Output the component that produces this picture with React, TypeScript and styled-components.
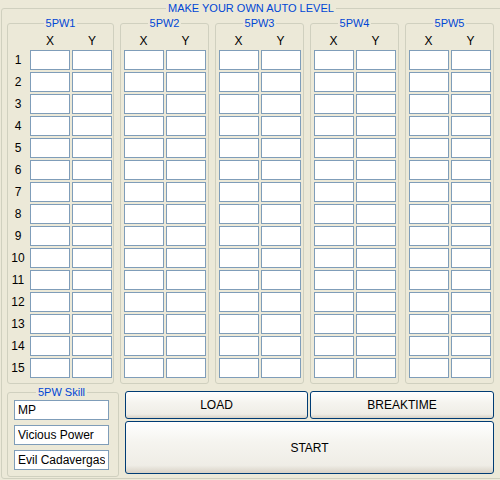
import React from 'react';
import styled, { createGlobalStyle } from 'styled-components';

const GlobalStyle = createGlobalStyle`
  html, body {
    margin: 0;
    padding: 0;
    background: #ece9d8;
    overflow: hidden;
  }
  body {
    font-family: "Liberation Sans", Arial, sans-serif;
    font-size: 11px;
    color: #000;
  }
`;

const rows = Array.from({ length: 15 }, (_, i) => i + 1);
const groups = ['5PW1', '5PW2', '5PW3', '5PW4', '5PW5'];
const skills = ['MP', 'Vicious Power', 'Evil Cadavergas'];

const App: React.FC = () => {
  return (
    <>
      <GlobalStyle />
      <Window>
        <MainBox>
          <Caption>MAKE YOUR OWN AUTO LEVEL</Caption>
          <Groups>
            {groups.map((name, gi) => (
              <GroupBox key={name} first={gi === 0}>
                <Caption>{name}</Caption>
                <CoordGrid numbered={gi === 0}>
                  {gi === 0 && <span />}
                  <ColHead>X</ColHead>
                  <ColHead>Y</ColHead>
                  {rows.map(r => (
                    <React.Fragment key={r}>
                      {gi === 0 && <RowNum>{r}</RowNum>}
                      <TextBox />
                      <TextBox />
                    </React.Fragment>
                  ))}
                </CoordGrid>
              </GroupBox>
            ))}
          </Groups>
          <BottomRow>
            <SkillBox>
              <Caption>5PW Skill</Caption>
              <SkillList>
                {skills.map(s => (
                  <SkillInput key={s} defaultValue={s} />
                ))}
              </SkillList>
            </SkillBox>
            <Buttons>
              <XPButton>LOAD</XPButton>
              <XPButton>BREAKTIME</XPButton>
              <XPButton wide>START</XPButton>
            </Buttons>
          </BottomRow>
        </MainBox>
      </Window>
    </>
  );
};

export default App;

// Styled components

const Window = styled.div`
  width: 500px;
  height: 480px;
  overflow: hidden;
`;

const MainBox = styled.fieldset`
  margin: 2px 0 0 1px;
  width: 510px;
  height: 477px;
  box-sizing: border-box;
  border: 1px solid #d0d0bf;
  border-radius: 3px;
  padding: 2px 0 0 5px;
  display: flex;
  flex-direction: column;

  > legend {
    margin-left: 159px;
  }
`;

const Caption = styled.legend`
  color: #0046d5;
  font-size: 11px;
  line-height: 13px;
  padding: 0 2px;
  margin: 0 auto;
`;

const Groups = styled.div`
  display: flex;
  gap: 6px;
`;

const GroupBox = styled.fieldset<{ first?: boolean }>`
  margin: 0;
  width: ${props => (props.first ? '107px' : '89px')};
  box-sizing: border-box;
  border: 1px solid #d0d0bf;
  border-radius: 3px;
  padding: 4px 0 5px 0;
`;

const CoordGrid = styled.div<{ numbered?: boolean }>`
  display: grid;
  grid-template-columns: ${props => (props.numbered ? '20px 40px 40px' : '40px 40px')};
  grid-template-rows: 14px;
  grid-auto-rows: 20px;
  column-gap: 2px;
  row-gap: 2px;
  justify-content: ${props => (props.numbered ? 'start' : 'center')};
`;

const ColHead = styled.div`
  text-align: center;
  line-height: 14px;
  font-size: 12px;
`;

const RowNum = styled.div`
  display: flex;
  align-items: center;
  justify-content: center;
  font-size: 12px;
`;

const TextBox = styled.input`
  width: 40px;
  height: 20px;
  box-sizing: border-box;
  border: 1px solid #7f9db9;
  background: #fff;
  margin: 0;
  padding: 0 3px;
  font-family: "Liberation Sans", Arial, sans-serif;
  font-size: 12px;
  outline: none;
`;

const BottomRow = styled.div`
  display: flex;
  align-items: flex-start;
  gap: 6px;
  margin-top: 2px;
`;

const SkillBox = styled.fieldset`
  margin: 0;
  width: 112px;
  box-sizing: border-box;
  border: 1px solid #d0d0bf;
  border-radius: 3px;
  padding: 1px 9px 6px 6px;
`;

const SkillList = styled.div`
  display: flex;
  flex-direction: column;
  gap: 5px;
`;

const SkillInput = styled(TextBox)`
  width: 95px;
`;

const Buttons = styled.div`
  display: grid;
  grid-template-columns: 183px 184px;
  grid-template-rows: 28px 53px;
  gap: 2px;
  padding-top: 5px;
`;

const XPButton = styled.button<{ wide?: boolean }>`
  grid-column: ${props => (props.wide ? '1 / span 2' : 'auto')};
  margin: 0;
  padding: 0;
  border: 1px solid #003c74;
  border-radius: 3px;
  background: linear-gradient(to bottom, #ffffff 0%, #f5f4ef 40%, #efede6 85%, #d8d2c6 100%);
  font-family: "Liberation Sans", Arial, sans-serif;
  font-size: 12px;
  color: #000;
  cursor: pointer;
`;
